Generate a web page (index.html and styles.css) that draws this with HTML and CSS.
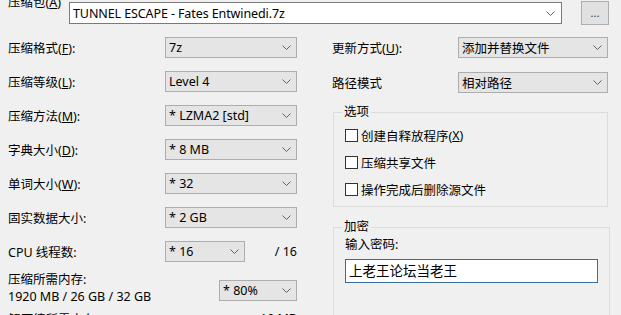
FILE: index.html
```html
<!DOCTYPE html>
<html lang="zh-CN">
<head>
    <meta charset="UTF-8">
    <title>添加到压缩包</title>
    <link rel="stylesheet" href="styles.css">
</head>
<body>
    <div class="archive-row">
        <span class="archive-label">压缩包(<u>A</u>)</span>
        <div class="combo edit">
            <span class="value">TUNNEL ESCAPE - Fates Entwinedi.7z</span>
            <svg class="chevron" width="9" height="5" viewBox="0 0 9 5"><path d="M0.5 0.5 L4.5 4.5 L8.5 0.5"/></svg>
        </div>
        <button class="browse">...</button>
    </div>

    <div class="columns">
        <div class="col-left">
            <div class="row">
                <span class="label">压缩格式(<u>F</u>):</span>
                <div class="combo"><span class="value">7z</span><svg class="chevron" width="9" height="5" viewBox="0 0 9 5"><path d="M0.5 0.5 L4.5 4.5 L8.5 0.5"/></svg></div>
            </div>
            <div class="row">
                <span class="label">压缩等级(<u>L</u>):</span>
                <div class="combo"><span class="value">Level 4</span><svg class="chevron" width="9" height="5" viewBox="0 0 9 5"><path d="M0.5 0.5 L4.5 4.5 L8.5 0.5"/></svg></div>
            </div>
            <div class="row">
                <span class="label">压缩方法(<u>M</u>):</span>
                <div class="combo"><span class="value">* LZMA2 [std]</span><svg class="chevron" width="9" height="5" viewBox="0 0 9 5"><path d="M0.5 0.5 L4.5 4.5 L8.5 0.5"/></svg></div>
            </div>
            <div class="row">
                <span class="label">字典大小(<u>D</u>):</span>
                <div class="combo"><span class="value">* 8 MB</span><svg class="chevron" width="9" height="5" viewBox="0 0 9 5"><path d="M0.5 0.5 L4.5 4.5 L8.5 0.5"/></svg></div>
            </div>
            <div class="row">
                <span class="label">单词大小(<u>W</u>):</span>
                <div class="combo"><span class="value">* 32</span><svg class="chevron" width="9" height="5" viewBox="0 0 9 5"><path d="M0.5 0.5 L4.5 4.5 L8.5 0.5"/></svg></div>
            </div>
            <div class="row">
                <span class="label">固实数据大小:</span>
                <div class="combo"><span class="value">* 2 GB</span><svg class="chevron" width="9" height="5" viewBox="0 0 9 5"><path d="M0.5 0.5 L4.5 4.5 L8.5 0.5"/></svg></div>
            </div>
            <div class="row">
                <span class="label">CPU 线程数:</span>
                <div class="combo short"><span class="value">* 16</span><svg class="chevron" width="9" height="5" viewBox="0 0 9 5"><path d="M0.5 0.5 L4.5 4.5 L8.5 0.5"/></svg></div>
                <span class="of">/ 16</span>
            </div>
            <div class="row mem-row">
                <div class="mem-label">
                    <div>压缩所需内存:</div>
                    <div>1920 MB / 26 GB / 32 GB</div>
                </div>
                <div class="combo tiny"><span class="value">* 80%</span><svg class="chevron" width="9" height="5" viewBox="0 0 9 5"><path d="M0.5 0.5 L4.5 4.5 L8.5 0.5"/></svg></div>
            </div>
            <div class="row last-row">
                <span class="label">解压缩所需内存:</span>
                <span class="of">10 MB</span>
            </div>
        </div>

        <div class="col-right">
            <div class="row">
                <span class="label">更新方式(<u>U</u>):</span>
                <div class="combo wide"><span class="value">添加并替换文件</span><svg class="chevron" width="9" height="5" viewBox="0 0 9 5"><path d="M0.5 0.5 L4.5 4.5 L8.5 0.5"/></svg></div>
            </div>
            <div class="row">
                <span class="label">路径模式</span>
                <div class="combo wide"><span class="value">相对路径</span><svg class="chevron" width="9" height="5" viewBox="0 0 9 5"><path d="M0.5 0.5 L4.5 4.5 L8.5 0.5"/></svg></div>
            </div>

            <fieldset class="group options">
                <legend>选项</legend>
                <label class="check"><span class="box"></span>创建自释放程序(<u>X</u>)</label>
                <label class="check"><span class="box"></span>压缩共享文件</label>
                <label class="check"><span class="box"></span>操作完成后删除源文件</label>
            </fieldset>

            <fieldset class="group encrypt">
                <legend>加密</legend>
                <div class="pw-label">输入密码:</div>
                <div class="pw-input">上老王论坛当老王</div>
            </fieldset>
        </div>
    </div>
</body>
</html>
```

FILE: styles.css
```css
* {
    margin: 0;
    padding: 0;
    box-sizing: border-box;
}
body {
    font-family: "Noto Sans", "Noto Sans CJK SC", sans-serif;
    font-size: 12px;
    color: #000;
    background: #f0f0f0;
    padding-left: 8px;
    overflow: hidden;
}
u {
    text-decoration: underline;
    text-underline-offset: 1px;
}
.archive-row {
    display: flex;
    align-items: flex-start;
    height: 26px;
}
.archive-label {
    width: 61px;
    line-height: 16px;
    margin-top: -5px;
    font-size: 12.5px;
}
.combo {
    display: flex;
    align-items: center;
    justify-content: space-between;
    width: 132px;
    height: 21px;
    padding: 0 5px 0 3px;
    background: #e5e5e5;
    border: 1px solid #adadad;
    white-space: nowrap;
}
.combo.edit {
    width: 493px;
    height: 22px;
    margin-top: 2px;
    padding-left: 3px;
    padding-right: 6px;
    background: #fff;
    border-color: #7a7a7a;
    font-size: 12.5px;
    letter-spacing: -0.1px;
}
.combo.short {
    width: 80px;
}
.combo.tiny {
    width: 78px;
}
.combo.wide {
    width: 150px;
}
.chevron {
    flex: none;
    fill: none;
    stroke: #606060;
    stroke-width: 1;
}
.browse {
    width: 28px;
    height: 24px;
    margin-left: 19px;
    margin-top: 1px;
    background: #e1e1e1;
    border: 1px solid #adadad;
    font-family: inherit;
    font-size: 11px;
    color: #333;
    line-height: 14px;
}
.columns {
    display: flex;
    margin-top: 11px;
}
.col-left {
    width: 289px;
    display: flex;
    flex-direction: column;
}
.col-right {
    width: 276px;
    margin-left: 35px;
    display: flex;
    flex-direction: column;
}
.row {
    display: flex;
    align-items: center;
    height: 21px;
    font-size: 12.5px;
}
.row + .row {
    margin-top: 13px;
}
.label {
    flex: 1;
    white-space: nowrap;
}
.col-left .label {
    flex: none;
    width: 157px;
}
.col-right .row + .row {
    margin-top: 14px;
}
.of {
    margin-left: auto;
}
.mem-row {
    height: 34px;
    align-items: flex-end;
}
.col-left .mem-row {
    margin-top: 9px;
}
.mem-label {
    flex: 1;
    line-height: 17px;
}
.mem-row .combo {
    margin-bottom: 4px;
}
.col-left .last-row {
    margin-top: 3px;
}
.group {
    border: 1px solid #dcdcdc;
    margin-left: 1px;
    padding: 0 11px;
    font-size: 12.5px;
}
.group legend {
    margin-left: -3px;
    padding: 0 2px;
    line-height: 16px;
}
.options {
    margin-top: 11px;
    padding-top: 5px;
    padding-bottom: 7px;
    display: flex;
    flex-direction: column;
    gap: 7px;
}
.check {
    display: flex;
    align-items: center;
    height: 20px;
}
.box {
    width: 13px;
    height: 13px;
    margin-right: 3px;
    background: #fff;
    border: 1px solid #333;
}
.encrypt {
    margin-top: 12px;
    height: 120px;
    padding-top: 1px;
}
.pw-label {
    line-height: 17px;
}
.pw-input {
    width: 253px;
    height: 24px;
    margin-top: 6px;
    padding-left: 3px;
    line-height: 22px;
    background: #fff;
    border: 1px solid #3a6e96;
    font-size: 13.5px;
}
```
